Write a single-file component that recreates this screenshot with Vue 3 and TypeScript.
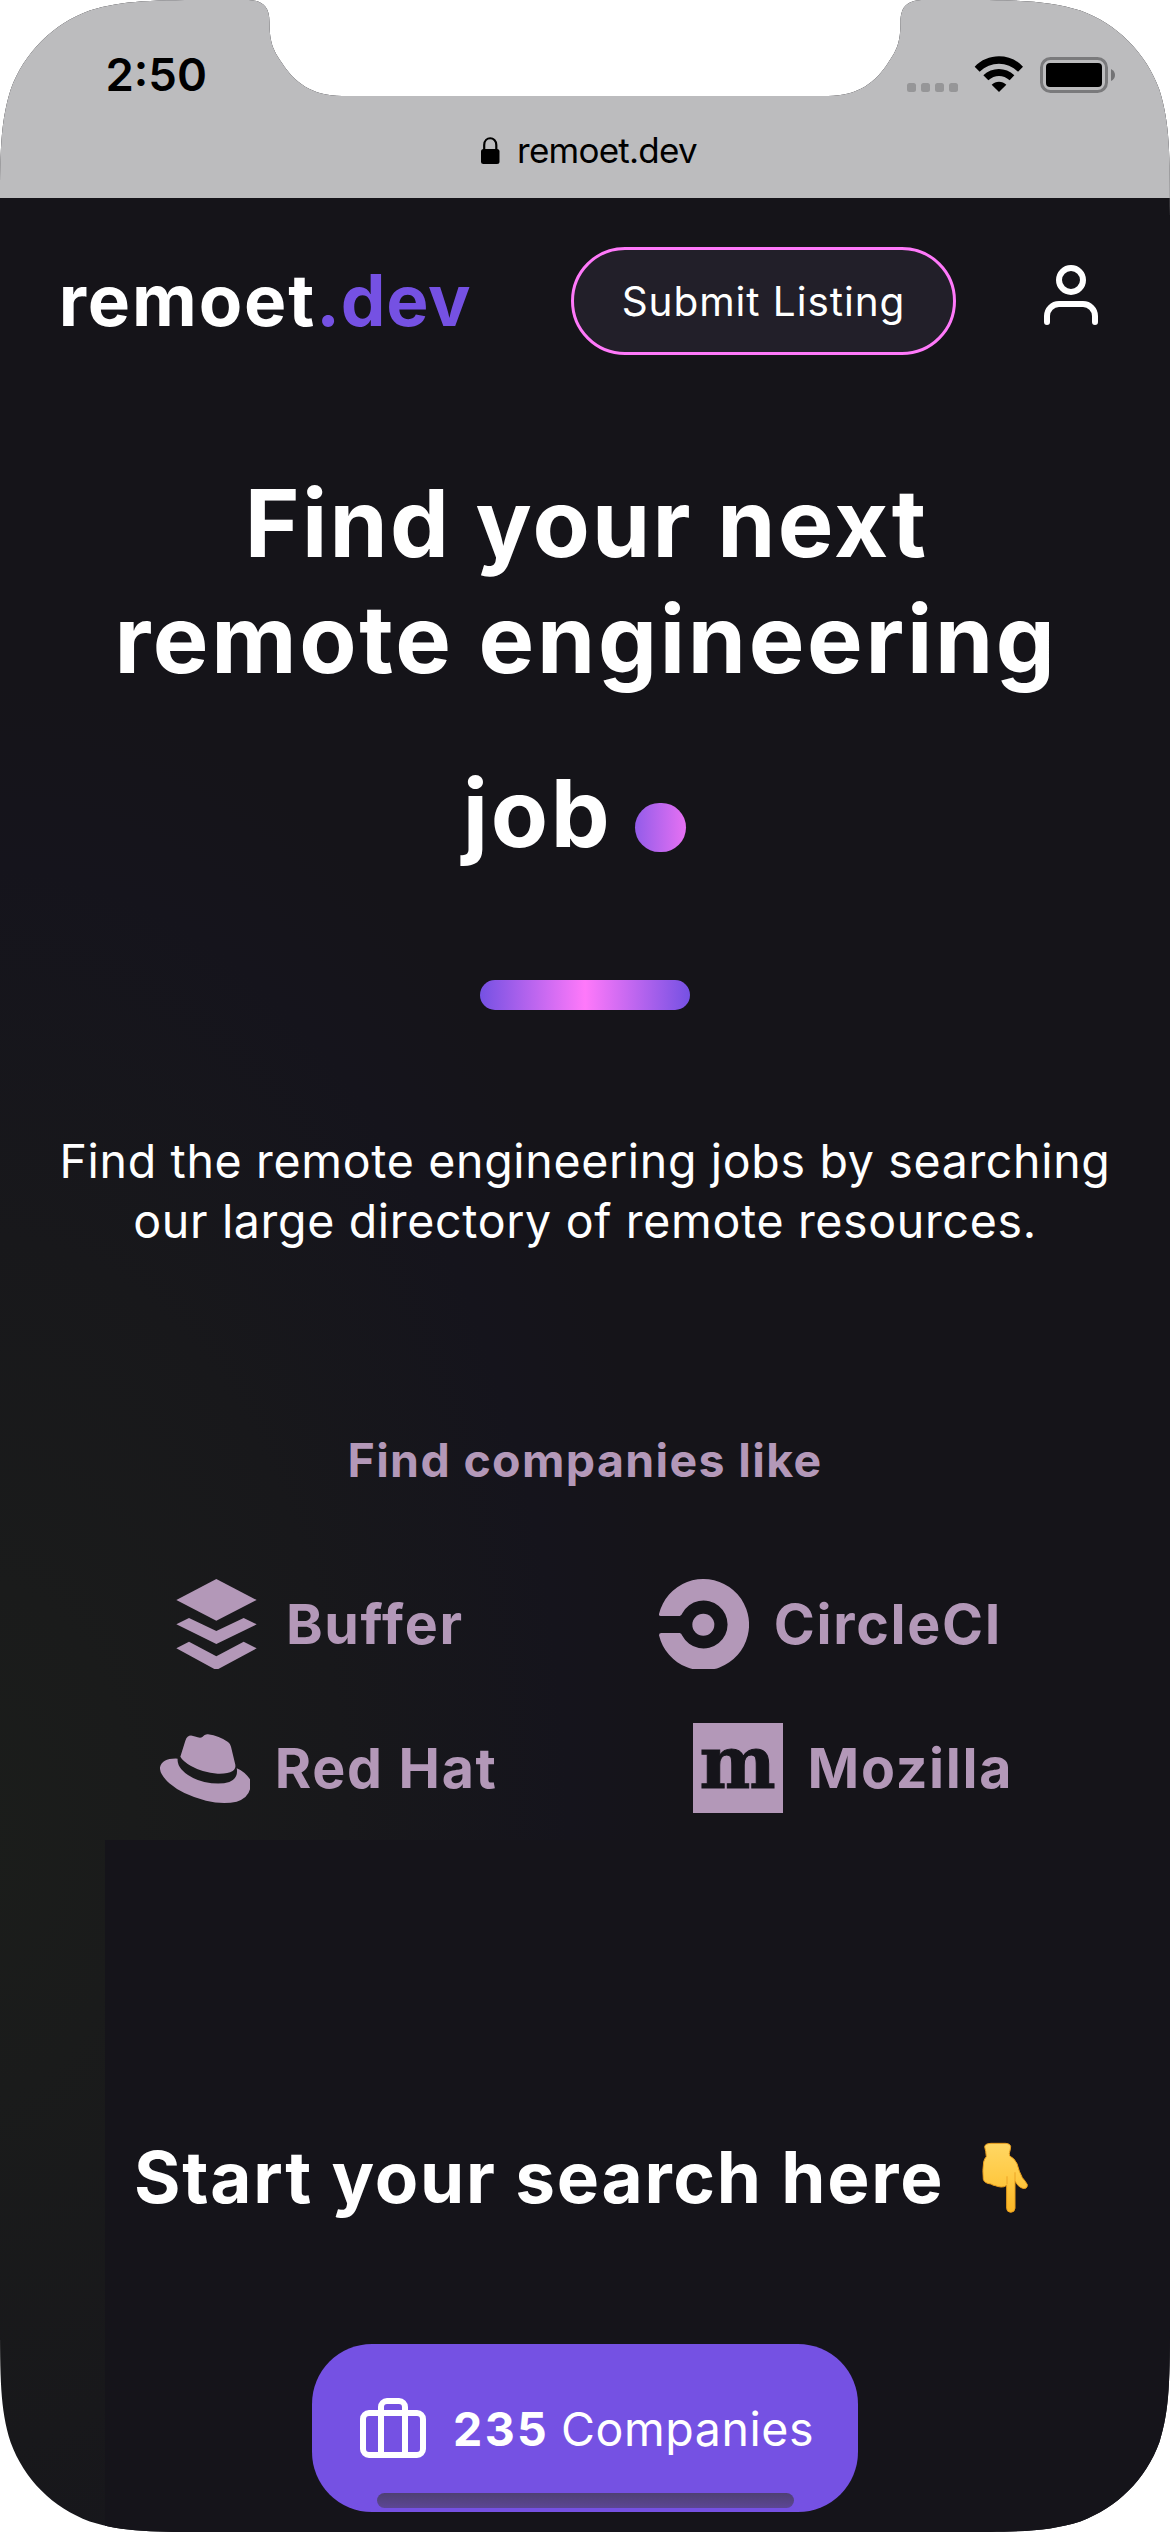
<script setup lang="ts">
interface Company {
  name: string
  icon: 'buffer' | 'circleci' | 'redhat' | 'mozilla'
}

const companyRows: Company[][] = [
  [
    { name: 'Buffer', icon: 'buffer' },
    { name: 'CircleCI', icon: 'circleci' },
  ],
  [
    { name: 'Red Hat', icon: 'redhat' },
    { name: 'Mozilla', icon: 'mozilla' },
  ],
]

const companyCount = 235
</script>

<template>
  <div class="screen">
    <div class="browser">
      <div class="status">
        <span class="time">2:50</span>
        <div class="indicators">
          <div class="signal"><i v-for="n in 4" :key="n"></i></div>
          <svg class="wifi" viewBox="222 42 150 114">
            <path d="M224 77C262 35 332 35 369 77L354 92C322 60 272 60 239 92Z" />
            <path d="M250 103C276 77.500 317 77.500 343 103L329 118C310 101 284 101 265 118Z" />
            <path d="M275 131C287 119 307 119 319 131L297 153Z" />
          </svg>
          <svg class="battery" viewBox="0 0 76 36">
            <rect x="1.500" y="1.500" width="65" height="33" rx="9" fill="none" stroke="#7a7a7c" stroke-width="3" />
            <rect x="6" y="6" width="56" height="24" rx="4" fill="#000" />
            <path d="M71 12Q75 14 75 18T71 24Z" fill="#737375" />
          </svg>
        </div>
      </div>
      <div class="address">
        <svg class="lock" viewBox="0 0 19 27">
          <rect x="0" y="12" width="18.500" height="15" rx="2.500" />
          <path d="M3.200 13V8C3.200 -1 15.300 -1 15.300 8V13" fill="none" stroke="#000" stroke-width="2.200" />
        </svg>
        <span>remoet.dev</span>
      </div>
    </div>

    <header class="header">
      <div class="logo">remoet<span>.dev</span></div>
      <button class="submit">Submit Listing</button>
      <svg class="user" viewBox="0 0 24 24" fill="none" stroke="#fff" stroke-width="2" stroke-linecap="round" stroke-linejoin="round">
        <path d="M20 21v-2a4 4 0 0 0-4-4H8a4 4 0 0 0-4 4v2" />
        <circle cx="12" cy="7" r="4" />
      </svg>
    </header>

    <main class="hero">
      <h1 class="title">
        <span class="line first">Find your next</span>
        <span class="line second">remote engineering</span>
        <span class="line last">job<i class="dot"></i></span>
      </h1>
      <div class="bar"></div>
      <p class="lead">Find the remote engineering jobs by searching<br />our large directory of remote resources.</p>

      <h2 class="like">Find companies like</h2>
      <div class="companies">
        <div v-for="(row, r) in companyRows" :key="r" class="row">
          <div v-for="c in row" :key="c.name" class="company">
            <svg v-if="c.icon === 'buffer'" viewBox="93 117 270 270">
              <path d="M229 117L350 180L229 242L109 180Z" />
              <path d="M147 234L229 273L311 234L350 253L229 312L109 253Z" />
              <path d="M147 305L229 349L311 305L350 325L235 387H223L109 325Z" />
            </svg>
            <svg v-else-if="c.icon === 'circleci'" viewBox="113 117 270 270">
              <circle cx="246" cy="254" r="33" />
              <path d="M113 222A137 137 0 1 1 113 286Q113 279 120 279H175Q180 279 183 287A72 72 0 1 0 183 220Q180 228 175 228H118Q112 228 113 222Z" />
            </svg>
            <svg v-else-if="c.icon === 'redhat'" viewBox="12 -21 270 270">
              <path d="M73 80L88 32Q94 15 108 17Q118 19 125 22Q134 25 139 21Q147 11 156 13Q190 18 216 36Q223 41 225 50L238 104Q240 116 230 123Q215 132 185 131Q140 128 105 108Q80 93 73 80Z" />
              <path d="M65 86Q63 102 76 118Q100 145 145 156Q190 165 220 156Q245 146 243 120L242 115Q265 124 282 148V178Q275 205 242 215Q200 224 150 212Q80 195 40 160Q10 132 12 112Q18 84 65 86Z" />
            </svg>
            <span v-else class="moz"><b>m</b></span>
            <span class="name">{{ c.name }}</span>
          </div>
        </div>
      </div>
    </main>

    <section class="search">
      <h2 class="start">
        Start your search here
        <svg viewBox="0 0 240 285">
          <defs>
            <linearGradient id="hand" x1="0" y1="0" x2="0" y2="1">
              <stop offset="0" stop-color="#ffd764" />
              <stop offset="0.5" stop-color="#ffca45" />
              <stop offset="1" stop-color="#fbb625" />
            </linearGradient>
          </defs>
          <path
            d="M56 50Q57 41 75 40H118Q133 41 134 50Q133 60 130 70L131 78Q145 84 153 101Q159 125 169 143Q179 154 184 164Q184 178 170 175Q155 170 147 152V235Q146 247 134 247Q122 246 122 235V166Q115 172 105 171Q95 170 88 167Q80 166 75 162Q55 160 52 148Q49 120 53 96Q55 86 61 80Q60 65 56 50Z"
            fill="url(#hand)"
            stroke="#e89d1c"
            stroke-width="3"
          />
          <path d="M123 162V140M147 150V128" fill="none" stroke="#eda427" stroke-width="3" stroke-linecap="round" />
        </svg>
      </h2>
      <button class="cta">
        <svg viewBox="0 0 24 24" fill="none" stroke="#fff" stroke-width="2" stroke-linecap="round" stroke-linejoin="round">
          <rect x="2" y="7" width="20" height="14" rx="2" />
          <path d="M16 21V5a2 2 0 0 0-2-2h-4a2 2 0 0 0-2 2v16" />
        </svg>
        <b>{{ companyCount }}</b>
        <span>Companies</span>
      </button>
    </section>

    <div class="home"></div>
  </div>
</template>

<style>
body {
  background: #fff;
}
</style>

<style scoped>
.screen {
  position: relative;
  display: flex;
  flex-direction: column;
  width: 1170px;
  height: 2532px;
  overflow: hidden;
  color: #fff;
  font-family: Inter, 'Liberation Sans', sans-serif;
  background:
    radial-gradient(ellipse 700px 1160px at -20px 1840px, #1b1d1b 0%, #1a1b1b 22%, #18181b 52%, #15141c 84%, #151419 100%);
  clip-path: path('M0 217C0 154.600 0 123.300 10.600 89.700C24 52.900 52.900 24 89.700 10.600C123.300 0 154.600 0 217 0H246C261 0 269.500 5 269.500 22C269.500 42 273 50 282 63C294 82 312 96 342 96H828C858 96 876 82 888 63C897 50 900.500 42 900.500 22C900.500 5 909 0 924 0H953C1015.400 0 1046.700 0 1080.300 10.600C1117.100 24 1146 52.900 1159.400 89.700C1170 123.300 1170 154.600 1170 217V2315C1170 2377.400 1170 2408.700 1159.400 2442.300C1146 2479.100 1117.100 2508 1080.300 2521.400C1046.700 2532 1015.400 2532 953 2532H217C154.600 2532 123.300 2532 89.700 2521.400C52.900 2508 24 2479.100 10.600 2442.300C0 2408.700 0 2377.400 0 2315Z');
}

h1,
h2,
p {
  margin: 0;
}

button {
  box-sizing: border-box;
  color: #fff;
  font-family: inherit;
}

svg {
  display: block;
  flex: none;
}

/* Browser chrome */
.browser {
  box-sizing: border-box;
  height: 198px;
  background: #bcbcbe;
  color: #000;
}

.status {
  box-sizing: border-box;
  display: flex;
  align-items: center;
  justify-content: space-between;
  height: 102px;
  padding: 47px 54px 0 105.500px;
}

.time {
  font-size: 45.500px;
  font-weight: 600;
}

.indicators {
  display: flex;
  align-items: center;
}

.signal {
  display: flex;
  gap: 5px;
  margin: 25px 16px 0 0;
}

.signal i {
  width: 9px;
  height: 9px;
  border-radius: 2.500px;
  background: #969698;
}

.wifi {
  width: 50px;
  height: 38px;
  margin: 0 16px 2px 0;
}

.battery {
  width: 76px;
  height: 36px;
}

.address {
  display: flex;
  align-items: center;
  justify-content: center;
  gap: 17px;
  height: 96px;
  padding-left: 8px;
  font-size: 35px;
  letter-spacing: -0.750px;
}

.lock {
  width: 19px;
  height: 27px;
}

/* Header */
.header {
  display: flex;
  align-items: center;
  height: 108px;
  padding: 49px 63px 0 58.700px;
}

.logo {
  font-size: 71px;
  font-weight: 700;
  line-height: 86px;
  margin-bottom: 2px;
  letter-spacing: 1.900px;
}

.logo span {
  color: #7551e3;
  letter-spacing: 0.800px;
}

.submit {
  width: 385px;
  height: 108px;
  margin-left: auto;
  padding: 0;
  border: 3px solid #ff79fa;
  border-radius: 54px;
  background: #221f29;
  font-size: 40.500px;
  letter-spacing: 0.940px;
}

.user {
  width: 72px;
  height: 72px;
  margin: 0 0 12px 79px;
}

/* Hero */
.hero {
  display: flex;
  flex-direction: column;
  align-items: center;
  text-align: center;
}

.title {
  margin-top: 109.500px;
  font-size: 93.500px;
  font-weight: 700;
  line-height: 116.500px;
  letter-spacing: 2.700px;
}

.line {
  display: block;
}

.line.first {
  padding-left: 3px;
  letter-spacing: 2.270px;
}

.line.second {
  padding-left: 2px;
}

.line.last {
  display: flex;
  align-items: center;
  justify-content: center;
  margin-top: 57.500px;
}

.dot {
  width: 51px;
  height: 49px;
  margin: 28px 21px 0 23px;
  border-radius: 25px;
  background: linear-gradient(90deg, #935ce9, #e671f3);
}

.bar {
  width: 210px;
  height: 30px;
  margin-top: 108.500px;
  border-radius: 15px;
  background: linear-gradient(90deg, #7551e3, #ff79fa, #7551e3);
}

.lead {
  margin-top: 120.500px;
  font-size: 46.500px;
  line-height: 60px;
  letter-spacing: 0.670px;
  white-space: nowrap;
}

.like {
  margin-top: 179.500px;
  color: #b398b8;
  font-size: 46.500px;
  font-weight: 700;
  line-height: 60px;
  letter-spacing: 1.350px;
}

.companies {
  display: flex;
  flex-direction: column;
  gap: 54px;
  margin-top: 89px;
}

.row {
  display: flex;
  justify-content: center;
  gap: 195px;
  padding-left: 3px;
}

.company {
  display: flex;
  align-items: center;
  gap: 25px;
  height: 90px;
  color: #b398b8;
}

.company svg {
  width: 90px;
  height: 90px;
  fill: currentColor;
}

.moz {
  display: flex;
  justify-content: center;
  width: 90px;
  height: 90px;
  background: #b398b8;
  color: #15141a;
}

.moz b {
  font-family: 'DejaVu Serif', serif;
  font-size: 72px;
  line-height: 80px;
  -webkit-text-stroke: 1px #15141a;
}

.name {
  font-size: 55.500px;
  font-weight: 700;
  line-height: 68px;
  margin-bottom: 1px;
  letter-spacing: 1.700px;
}

/* Search */
.search {
  flex: 1;
  margin: 27px 0 0 105px;
  background: #15141a;
}

.start {
  display: flex;
  align-items: center;
  gap: 22px;
  padding: 292.500px 0 0 29px;
  font-size: 71px;
  font-weight: 700;
  line-height: 88px;
  letter-spacing: 1.740px;
}

.start svg {
  width: 80px;
  height: 95px;
  margin: -3px 0 -5px;
}

.cta {
  display: flex;
  align-items: center;
  width: 546px;
  height: 168px;
  margin: 123.500px 0 0 207px;
  padding: 0 0 0 45px;
  border: 0;
  border-radius: 60px;
  background: #7551e3;
  font-size: 46.500px;
}

.cta svg {
  width: 72px;
  height: 72px;
}

.cta b {
  margin: 2px 0 0 24px;
  letter-spacing: 2.350px;
}

.cta span {
  margin: 2px 0 0 12px;
  letter-spacing: 0.560px;
}

.home {
  position: absolute;
  bottom: 24px;
  left: 377px;
  width: 417px;
  height: 15px;
  border-radius: 8px;
  background: linear-gradient(#4e4073, #5c4694);
}
</style>
